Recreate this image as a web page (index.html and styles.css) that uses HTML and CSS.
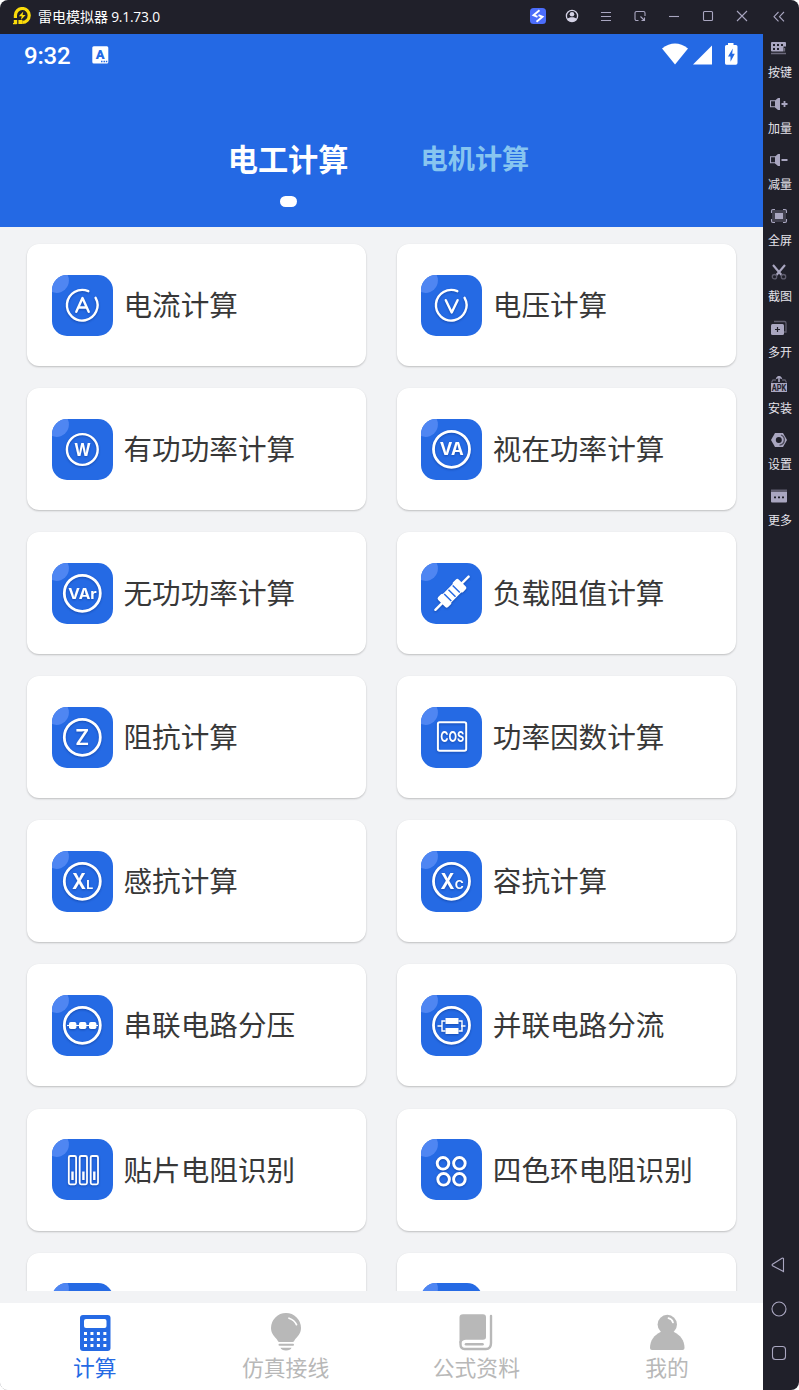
FILE: index.html
```html
<!DOCTYPE html>
<html lang="zh-CN">
<head>
    <meta charset="UTF-8">
    <meta name="viewport" content="width=device-width, initial-scale=1.0">
    <title>雷电模拟器</title>
    <link rel="stylesheet" href="styles.css">
</head>
<body>

<svg class="defs" width="0" height="0">
    <defs>
        <clipPath id="tile-clip"><rect width="61" height="61" rx="15"/></clipPath>
    </defs>
    <symbol id="tile" viewBox="0 0 61 61">
        <g clip-path="url(#tile-clip)">
            <rect width="61" height="61" fill="#256ae4"/>
            <circle cx="4.5" cy="5.5" r="12.4" fill="#4f86f2"/>
        </g>
    </symbol>
</svg>

<div class="window">
    <div class="titlebar">
        <svg class="logo" width="18" height="18" viewBox="0 0 18 18">
            <path d="M2.400 11V8.600a6.900 6.900 0 1 1 6.900 6.700" fill="none" stroke="#fbdc0a" stroke-width="3.200"/>
            <path d="M10.300 4.600 5.800 9.300h2.900l-.8 3.600 4.700-4.900H9.600z" fill="#fbdc0a"/>
            <path d="M0 16h3.600v1.200H0zM.8 13h3.400v4.100H.8zM5.400 13h4v4.100h-4z" fill="#fbdc0a"/>
        </svg>
        <span class="app-name">雷电模拟器 <span class="version">9.1.73.0</span></span>
        <div class="win-buttons">
            <svg viewBox="0 0 16 16"><rect width="16" height="16" rx="3.500" fill="#4b6dfb"/><path d="M9.500 2.300 3.500 7.200l4 1.600M6.500 13.700l6-4.900-4-1.600" fill="none" stroke="#fff" stroke-width="1.900"/></svg>
            <svg viewBox="0 0 16 16"><circle cx="8" cy="8" r="5.600" fill="none" stroke="#d5d3e6" stroke-width="1.300"/><circle cx="8" cy="6.300" r="2.300" fill="#d5d3e6"/><path d="M3.400 11c1.200-2.200 8-2.200 9.200 0-1.500 3.100-7.700 3.100-9.200 0z" fill="#d5d3e6"/></svg>
            <svg viewBox="0 0 16 16"><path d="M3 4.500h10M3 8.500h10M3 12.500h10" class="line"/></svg>
            <svg viewBox="0 0 16 16"><path d="M6.500 12.500h-2a1.500 1.500 0 0 1-1.500-1.500V5a1.500 1.500 0 0 1 1.500-1.500h7A1.500 1.500 0 0 1 13 5v3M8.500 8.500l4 4M12.500 9.500v3h-3" class="line"/></svg>
            <svg viewBox="0 0 16 16"><path d="M3 8.500h10" class="line"/></svg>
            <svg viewBox="0 0 16 16"><rect x="3.500" y="3.500" width="9" height="9" rx="1" class="line"/></svg>
            <svg viewBox="0 0 16 16"><path d="M3 3l10 10M13 3L3 13" class="line"/></svg>
            <svg viewBox="0 0 16 16"><path d="M7.500 4 3 8.700l4.500 4.700M13 4 8.500 8.700l4.500 4.700" class="line"/></svg>
        </div>
    </div>

    <div class="main">
        <div class="phone">
            <header class="header">
                <div class="status">
                    <span class="time">9:32</span>
                    <svg class="ime" width="17" height="18" viewBox="0 0 17 18"><rect x=".3" y=".3" width="16" height="17.300" rx="1.500" fill="#fff"/><text x="8.200" y="13.300" class="ime-a">A</text><path d="M9 15.500h1.500M11.500 15.500h1.500M13.800 15.500h1.500" stroke="#2469e4" stroke-width="1.300"/></svg>
                    <svg class="signals" width="78" height="26" viewBox="0 0 78 26">
                        <path d="M1 6.500Q14-3.500 27 6.500L14 22.500z" fill="#fff"/>
                        <path d="M51 3.500V22.500H32z" fill="#fff"/>
                        <path d="M67 1h5.500v2H75a1.500 1.500 0 0 1 1.500 1.500V21a1.700 1.700 0 0 1-1.700 1.700H65.500A1.500 1.500 0 0 1 64 21V4.500A1.500 1.500 0 0 1 65.500 3H67z" fill="#fff"/>
                        <path d="M71.800 6.500 67 14.500h2.500v5.300l4.300-8h-2.600z" fill="#2469e4"/>
                    </svg>
                </div>
                <div class="tabs">
                    <div class="tab active">电工计算</div>
                    <div class="tab">电机计算</div>
                </div>
            </header>

            <div class="list">
                <div class="card">
                    <svg class="icon" viewBox="0 0 61 61"><use href="#tile"/><g class="glyph"><path d="M36.300 16.200A15.300 15.300 0 1 0 43.600 22.800" class="ring thin"/><path d="M24.300 36.800 30.500 23l6.200 13.800M26.500 32.500h8" class="letter"/></g></svg>
                    <span>电流计算</span>
                </div>
                <div class="card">
                    <svg class="icon" viewBox="0 0 61 61"><use href="#tile"/><g class="glyph"><path d="M36.300 16.200A15.300 15.300 0 1 0 43.600 22.800" class="ring thin"/><path d="M24.800 25.200 30.700 37.500 36.600 25.200" class="letter"/></g></svg>
                    <span>电压计算</span>
                </div>
                <div class="card">
                    <svg class="icon" viewBox="0 0 61 61"><use href="#tile"/><g class="glyph"><circle cx="30.300" cy="30.500" r="15.400" class="ring thin"/><text x="30.500" y="36.600" font-size="17" class="bold" textLength="16.500" lengthAdjust="spacingAndGlyphs">W</text></g></svg>
                    <span>有功功率计算</span>
                </div>
                <div class="card">
                    <svg class="icon" viewBox="0 0 61 61"><use href="#tile"/><g class="glyph"><circle cx="30.500" cy="30.300" r="18" class="ring"/><text x="30.800" y="36.300" font-size="17.500" class="bold" textLength="24" lengthAdjust="spacingAndGlyphs">VA</text></g></svg>
                    <span>视在功率计算</span>
                </div>
                <div class="card">
                    <svg class="icon" viewBox="0 0 61 61"><use href="#tile"/><g class="glyph"><circle cx="30.300" cy="30.300" r="18" class="ring"/><text x="30.500" y="36" font-size="14.500" class="bold" textLength="28.500" lengthAdjust="spacingAndGlyphs">VAr</text></g></svg>
                    <span>无功功率计算</span>
                </div>
                <div class="card">
                    <svg class="icon" viewBox="0 0 61 61"><use href="#tile"/>
                        <g class="glyph"><g transform="translate(31 30.200) rotate(-45)">
                            <path d="M-23.500 0H23.500" class="ring thin"/>
                            <path d="M-14.500-5q0-2 2-2h4q1 0 1.500 1h14q.5-1 1.500-1h4q2 0 2 2v10q0 2-2 2h-4q-1 0-1.500-1h-14q-.5 1-1.500 1h-4q-2 0-2-2z" fill="#fff"/>
                            <path d="M-6-5v10M0-5v10M6-5v10" stroke="#256ae4" stroke-width="1.500" fill="none"/>
                        </g></g>
                    </svg>
                    <span>负载阻值计算</span>
                </div>
                <div class="card">
                    <svg class="icon" viewBox="0 0 61 61"><use href="#tile"/><g class="glyph"><circle cx="30.300" cy="30.300" r="18" class="ring"/><text x="30.200" y="38.300" font-size="21.500" textLength="14" lengthAdjust="spacingAndGlyphs">Z</text></g></svg>
                    <span>阻抗计算</span>
                </div>
                <div class="card">
                    <svg class="icon" viewBox="0 0 61 61"><use href="#tile"/><g class="glyph"><rect x="16.900" y="15.300" width="28.300" height="28.500" rx="1.800" class="ring cos"/><text x="31.200" y="35.200" font-size="15" class="bold" textLength="24" lengthAdjust="spacingAndGlyphs">COS</text></g></svg>
                    <span>功率因数计算</span>
                </div>
                <div class="card">
                    <svg class="icon" viewBox="0 0 61 61"><use href="#tile"/><g class="glyph"><circle cx="30.300" cy="30.300" r="18" class="ring"/><text x="27" y="38" font-size="21.500" class="bold" textLength="14" lengthAdjust="spacingAndGlyphs">X</text><text x="37.700" y="38" font-size="11.500" class="bold" textLength="7" lengthAdjust="spacingAndGlyphs">L</text></g></svg>
                    <span>感抗计算</span>
                </div>
                <div class="card">
                    <svg class="icon" viewBox="0 0 61 61"><use href="#tile"/><g class="glyph"><circle cx="30.500" cy="30.300" r="18" class="ring"/><text x="26.500" y="38" font-size="21.500" class="bold" textLength="14" lengthAdjust="spacingAndGlyphs">X</text><text x="38.300" y="38" font-size="11.500" class="bold" textLength="9" lengthAdjust="spacingAndGlyphs">C</text></g></svg>
                    <span>容抗计算</span>
                </div>
                <div class="card">
                    <svg class="icon" viewBox="0 0 61 61"><use href="#tile"/><g class="glyph"><circle cx="30.300" cy="30.300" r="18" class="ring"/><path d="M15 30.500H46" stroke="#fff" stroke-width="1.200"/><rect x="17" y="27" width="7.400" height="7" rx="1.800" fill="#fff"/><rect x="27" y="27" width="7.400" height="7" rx="1.800" fill="#fff"/><rect x="37" y="27" width="7.400" height="7" rx="1.800" fill="#fff"/></g></svg>
                    <span>串联电路分压</span>
                </div>
                <div class="card">
                    <svg class="icon" viewBox="0 0 61 61"><use href="#tile"/><g class="glyph"><circle cx="30.500" cy="30.300" r="18" class="ring"/><path d="M16.500 31h4.500M40 31h4.500M24.500 26H21v10h3.500M37.500 26H41v10h-3.500" stroke="#fff" stroke-width="1.400" fill="none"/><path d="M24.500 23h13v6h-13zM24.500 33h13v6h-13z" fill="#fff"/></g></svg>
                    <span>并联电路分流</span>
                </div>
                <div class="card">
                    <svg class="icon" viewBox="0 0 61 61"><use href="#tile"/><g class="glyph"><g fill="none" stroke="#fff" stroke-width="1.800"><rect x="16.800" y="17" width="7.300" height="28.300" rx="1.500"/><rect x="27.700" y="17" width="7.300" height="28.300" rx="1.500"/><rect x="38.700" y="17" width="7.300" height="28.300" rx="1.500"/></g><path d="M20.500 32.500v8.500M31.400 32.500v8.500M42.300 32.500v8.500" stroke="#fff" stroke-width="2.400"/></g></svg>
                    <span>贴片电阻识别</span>
                </div>
                <div class="card">
                    <svg class="icon" viewBox="0 0 61 61"><use href="#tile"/><g class="glyph" fill="none" stroke="#fff" stroke-width="2.900"><circle cx="22" cy="24.300" r="5.800"/><circle cx="38.400" cy="24.300" r="5.800"/><circle cx="22.600" cy="40.300" r="5.800"/><circle cx="38.400" cy="40.300" r="5.800"/></g></svg>
                    <span>四色环电阻识别</span>
                </div>
                <div class="card">
                    <svg class="icon" viewBox="0 0 61 61"><use href="#tile"/></svg>
                </div>
                <div class="card">
                    <svg class="icon" viewBox="0 0 61 61"><use href="#tile"/></svg>
                </div>
            </div>

            <nav class="bottom-nav">
                <div class="nav-item active">
                    <svg width="40" height="40" viewBox="0 0 40 40"><rect x="5" y="3" width="30.500" height="36" rx="3" fill="currentColor"/><rect x="9" y="7" width="22.500" height="9" rx="2" fill="#fff"/><path d="M9 21.500h23M9 27.500h23M9 33.500h23" stroke="#fff" stroke-width="3" stroke-dasharray="3 3.450"/></svg>
                    <span>计算</span>
                </div>
                <div class="nav-item">
                    <svg width="40" height="40" viewBox="0 0 40 40"><path d="M20 1a15 15 0 0 1 15 15c0 6-4 9-6 11.500-1 1.300-.8 2.500-2.500 2.500h-13c-1.700 0-1.500-1.200-2.500-2.500C9 25 5 22 5 16A15 15 0 0 1 20 1z" fill="currentColor"/><path d="M23 6.200q5.500 1.800 7.500 6.500" fill="none" stroke="#fff" stroke-width="1.700" stroke-linecap="round"/><path d="M13.500 32.800h13.500" stroke="currentColor" stroke-width="2" stroke-linecap="round"/><path d="M14.500 35.800h11q-1 2.700-5.500 2.700t-5.500-2.700z" fill="currentColor"/></svg>
                    <span>仿真接线</span>
                </div>
                <div class="nav-item">
                    <svg width="40" height="40" viewBox="0 0 40 40"><path d="M7 2.300h20q3 0 3 3V25q0 2.800-3 2.800H10q-3.500 0-4.500 2.500L3.500 31V5.300q0-3 3.500-3z" fill="currentColor"/><path d="M35 4v27q0 6-5 6H8.500Q4.500 37 4.500 32v-2" fill="none" stroke="currentColor" stroke-width="2.400" stroke-linecap="round"/><path d="M10 32.300h16.500" stroke="currentColor" stroke-width="2.600" stroke-linecap="round"/></svg>
                    <span>公式资料</span>
                </div>
                <div class="nav-item">
                    <svg width="40" height="40" viewBox="0 0 40 40"><circle cx="20.300" cy="12.500" r="9.700" fill="currentColor"/><path d="M13.500 20h13.500C33 23 37.500 28 37.500 36q0 2-2 2H5q-2 0-2-2c0-8 4.500-13 10.500-16z" fill="currentColor"/><path d="M21.500 6.200q3.500.8 4.500 4.300" fill="none" stroke="#fff" stroke-width="1.700" stroke-linecap="round"/></svg>
                    <span>我的</span>
                </div>
            </nav>
        </div>

        <aside class="sidebar">
            <div class="tool"><svg viewBox="0 0 18 16"><path d="M2 2h13a1 1 0 0 1 1 1v3.500h-2.500v5H2a1 1 0 0 1-1-1V3a1 1 0 0 1 1-1z" class="fill"/><path d="M3 5h2M7 5h2M11 5h2M3 9h2M7 9h2" stroke="#20202a" stroke-width="2"/><path d="M14.500 8v3.500M1 13.500h15" stroke="#6b697b" stroke-width="1.300"/></svg><span>按键</span></div>
            <div class="tool"><svg viewBox="0 0 18 16"><path d="M5.500 4.700h-5v6h5" class="line"/><path d="M5 4.500 8 2h2v12H8l-3-2.500z" class="fill"/><path d="M11.500 8h6M14.500 5v6" stroke="#a9a6c0" stroke-width="1.800"/></svg><span>加量</span></div>
            <div class="tool"><svg viewBox="0 0 18 16"><path d="M5.500 4.700h-5v6h5" class="line"/><path d="M5 4.500 8 2h2v12H8l-3-2.500z" class="fill"/><path d="M11.500 8h6" stroke="#a9a6c0" stroke-width="1.800"/></svg><span>减量</span></div>
            <div class="tool"><svg viewBox="0 0 18 16"><rect x="2" y="2" width="14" height="12" fill="#41404e"/><path d="M1.500 5V3q0-1.500 1.500-1.500h2M13 1.500h2q1.500 0 1.500 1.500v2M16.500 11v2q0 1.500-1.500 1.500h-2M5 14.500H3Q1.500 14.500 1.500 13v-2" class="line"/><path d="M5 5h8v6H5z" class="fill"/></svg><span>全屏</span></div>
            <div class="tool"><svg viewBox="0 0 18 16"><path d="M3 1l8.500 10M15 1 6.500 11" stroke="#a9a6c0" stroke-width="2.100"/><circle cx="4.500" cy="12.700" r="2.200" class="dim"/><circle cx="13.500" cy="12.700" r="2.200" class="dim"/></svg><span>截图</span></div>
            <div class="tool"><svg viewBox="0 0 18 16"><path d="M4 1.500h10.500q1.500 0 1.500 1.500v9h-2" class="dim"/><rect x="1" y="4" width="13" height="11" rx="1.500" class="fill"/><path d="M5 9.500h5M7.500 7v5" stroke="#20202a" stroke-width="1.200"/></svg><span>多开</span></div>
            <div class="tool"><svg viewBox="0 0 18 16"><path d="M9 6V0M6.300 2.800 9 0l2.700 2.800" fill="none" stroke="#a9a6c0" stroke-width="1.600"/><path d="M6 4H3L1.500 6.500M12 4h3l1.500 2.500" class="dim"/><rect x="1" y="7" width="16" height="9" class="fill"/><text x="9" y="14.500" class="apk" textLength="14.500" lengthAdjust="spacingAndGlyphs">APK</text></svg><span>安装</span></div>
            <div class="tool"><svg viewBox="0 0 18 16"><path d="M5 1h8l4 7-4 7H5L1 8z" class="fill"/><path d="M11 3a5.300 5.300 0 0 1-1.500 10.200" stroke="#4a4958" stroke-width="1.300" fill="none"/><circle cx="8.800" cy="8" r="3" fill="#20202a"/></svg><span>设置</span></div>
            <div class="tool"><svg viewBox="0 0 18 16"><path d="M1 1.500h16v3H1z" fill="#5f5d6e"/><path d="M1 4h16v9.500q0 1-1 1H2q-1 0-1-1z" class="fill"/><path d="M4 9.300h2M8 9.300h2M12 9.300h2" stroke="#20202a" stroke-width="1.800"/></svg><span>更多</span></div>
            <div class="android-keys">
                <svg viewBox="0 0 16 16"><path d="M12.500 1.500v13L1.500 8.800q-.8-.8 0-1.600L11 1.300q1-.5 1.500.2z" class="line"/></svg>
                <svg viewBox="0 0 16 16"><circle cx="8" cy="8" r="7" class="line"/></svg>
                <svg viewBox="0 0 16 16"><rect x="1.500" y="1.500" width="13" height="13" rx="3" class="line"/></svg>
            </div>
        </aside>
    </div>
</div>

</body>
</html>
```

FILE: styles.css
```css
* {
    box-sizing: border-box;
}
body {
    margin: 0;
    background: #fff;
    font-family: Roboto, "Noto Sans CJK SC", sans-serif;
}
svg {
    display: block;
    flex: none;
}
.defs {
    position: absolute;
}
.window {
    display: flex;
    flex-direction: column;
    width: 799px;
    height: 1390px;
    border-radius: 8px;
    overflow: hidden;
    background: #20202a;
}
.line {
    fill: none;
    stroke: #a9a6c0;
    stroke-width: 1.1;
}
.dim {
    fill: none;
    stroke: #5f5d6e;
    stroke-width: 1.3;
}
.fill {
    fill: #a9a6c0;
}

/* title bar */
.titlebar {
    display: flex;
    align-items: center;
    height: 34px;
    padding: 0 12px 2px 13px;
}
.app-name {
    margin-left: 7px;
    color: #fff;
    font-family: "Noto Sans CJK SC", sans-serif;
    font-size: 14px;
    line-height: 20px;
    white-space: nowrap;
}
.version {
    font-family: "Open Sans", sans-serif;
    font-size: 13.8px;
    letter-spacing: -0.2px;
}
.win-buttons {
    display: flex;
    margin-left: auto;
    gap: 18px;
}
.win-buttons svg {
    width: 16px;
    height: 16px;
}
.win-buttons svg:last-child {
    margin-left: 3px;
}

.main {
    display: flex;
    flex: 1;
    min-height: 0;
}
.phone {
    display: flex;
    flex-direction: column;
    width: 763px;
    background: #f2f3f5;
}

/* header */
.header {
    height: 193px;
    background: #2469e4;
    color: #fff;
}
.status {
    display: flex;
    align-items: center;
    height: 43px;
    padding: 0 24px 0 24px;
}
.time {
    font-size: 24px;
    font-weight: 500;
    letter-spacing: -0.2px;
}
.ime {
    margin: -1px 0 0 22px;
}
.ime-a {
    font: 900 13px Roboto, sans-serif;
    fill: #2469e4;
    text-anchor: middle;
}
.signals {
    margin: -1px 0 0 auto;
}
.tabs {
    display: flex;
    justify-content: center;
    align-items: flex-start;
    gap: 72px;
    padding: 61px 6px 0 0;
}
.tab {
    color: #87c5f0;
    font-size: 27.2px;
    font-weight: 600;
    line-height: 45px;
}
.tab.active {
    color: #fff;
    font-size: 30.2px;
}
.tab.active::after {
    content: "";
    display: block;
    width: 17px;
    height: 11px;
    margin: 13px auto 0;
    border-radius: 6px;
    background: #fff;
}

/* cards */
.list {
    display: grid;
    grid-template-columns: 339px 339px;
    grid-auto-rows: 122px;
    gap: 22.1px 31px;
    height: 1064px;
    padding: 17px 27px 0;
    overflow: hidden;
}
.card {
    display: flex;
    align-items: center;
    gap: 10.5px;
    padding-left: 25px;
    border-radius: 12px;
    background: #fff;
    box-shadow: 0 1px 2px rgba(0, 0, 0, 0.22);
    color: #383838;
    font-size: 28.6px;
    line-height: 40px;
    white-space: nowrap;
}
.card:nth-child(even) {
    padding-left: 24.3px;
}
.card span {
    padding-top: 2px;
}
.icon {
    width: 61px;
    height: 61px;
}
.glyph {
    filter: drop-shadow(0 1.5px 1px rgba(5, 40, 120, 0.45));
}
.glyph text {
    font-family: Inter, sans-serif;
    font-weight: 600;
    fill: #fff;
    stroke: none;
    text-anchor: middle;
}
.glyph text.bold {
    font-weight: 700;
}
.ring {
    fill: none;
    stroke: #fff;
    stroke-width: 2.8;
    stroke-linecap: round;
}
.ring.thin {
    stroke-width: 2.4;
}
.ring.cos {
    stroke-width: 2;
}
.letter {
    fill: none;
    stroke: #fff;
    stroke-width: 2.4;
    stroke-linecap: round;
    stroke-linejoin: round;
}

/* bottom navigation */
.bottom-nav {
    display: flex;
    height: 87px;
    margin-top: auto;
    background: #fff;
}
.nav-item {
    display: flex;
    flex: 1;
    flex-direction: column;
    align-items: center;
    padding: 9px 1px 0 0;
    color: #b8b8b8;
    font-size: 21.8px;
    line-height: 34px;
}
.nav-item.active {
    color: #256ae4;
}

/* emulator toolbar */
.sidebar {
    display: flex;
    flex-direction: column;
    width: 36px;
}
.tool {
    display: flex;
    flex-direction: column;
    align-items: center;
    height: 56px;
    padding: 6px 4px 0 0;
    color: #e4e3ea;
    font-family: "Noto Sans CJK SC", sans-serif;
    font-size: 12px;
    line-height: 16px;
}
.tool svg {
    width: 18px;
    height: 16px;
}
.tool span {
    margin: 8px -2px 0 0;
}
.apk {
    font: 700 8.5px Roboto, sans-serif;
    fill: #20202a;
    text-anchor: middle;
}
.android-keys {
    display: flex;
    flex-direction: column;
    align-items: center;
    gap: 28px;
    margin: auto 4px 29px 0;
}
.android-keys svg {
    width: 16px;
    height: 16px;
}
```
